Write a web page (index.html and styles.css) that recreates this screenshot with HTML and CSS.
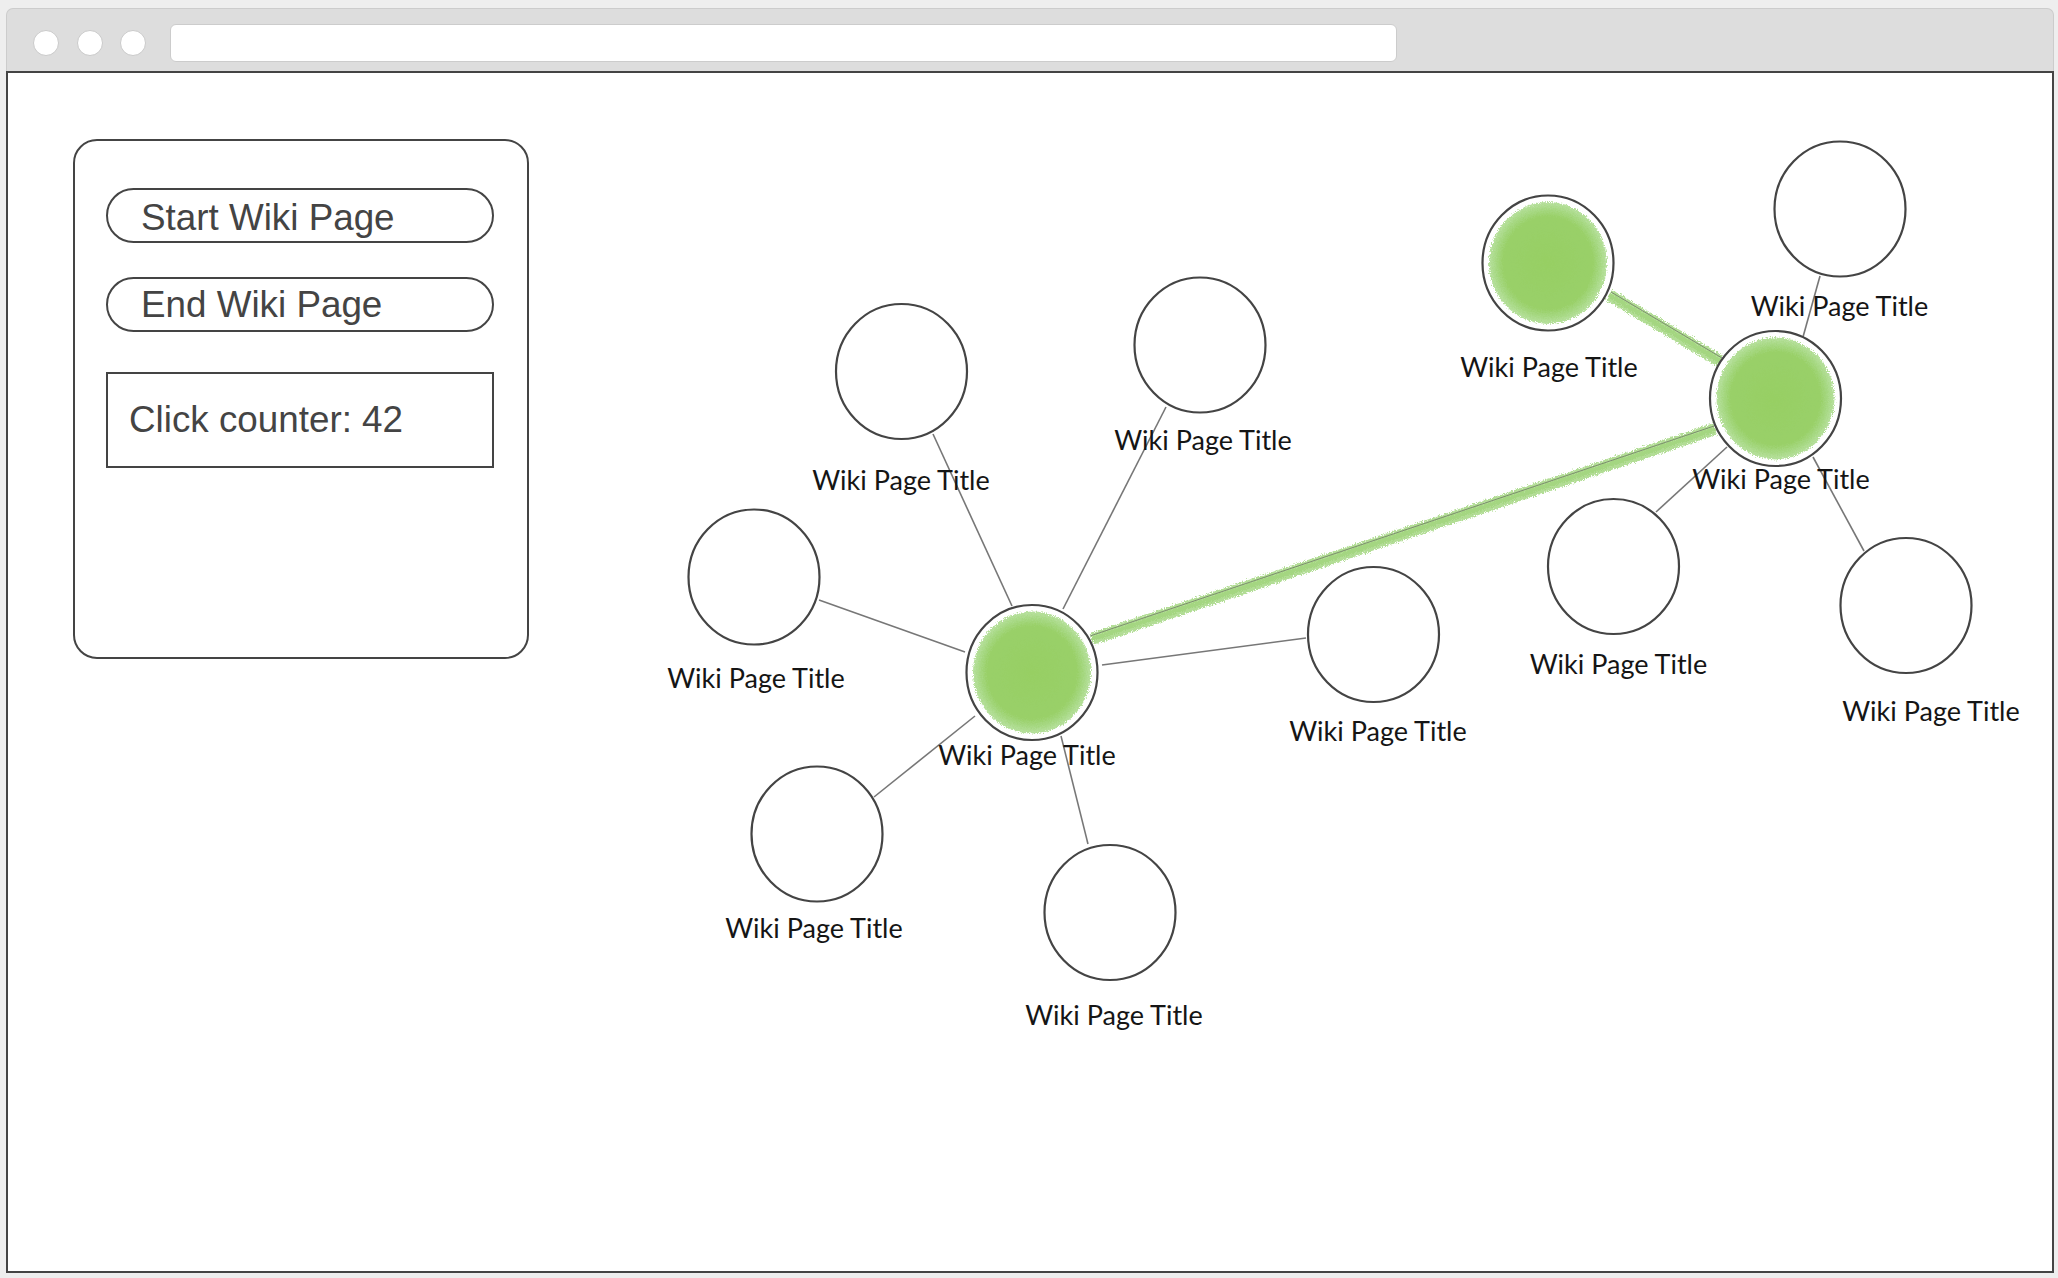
FILE: index.html
```html
<!DOCTYPE html>
<html lang="en">
<head>
<meta charset="utf-8">
<title>Wiki Race</title>
<link rel="stylesheet" href="styles.css">
</head>
<body>
<div class="window">
  <div class="toolbar">
    <span class="dot"></span>
    <span class="dot"></span>
    <span class="dot"></span>
    <div class="address"></div>
  </div>
  <div class="content">
    <div class="panel">
      <button class="pill">Start Wiki Page</button>
      <button class="pill">End Wiki Page</button>
      <div class="counter">Click counter: 42</div>
    </div>
    <svg class="graph" width="2044" height="1198" viewBox="8 73 2044 1198" xmlns="http://www.w3.org/2000/svg">
      <defs>
        <filter id="rough" x="-10%" y="-10%" width="120%" height="120%">
          <feTurbulence type="fractalNoise" baseFrequency="0.8" numOctaves="2" seed="3" result="noise"/>
          <feDisplacementMap in="SourceGraphic" in2="noise" scale="6" xChannelSelector="R" yChannelSelector="G"/>
        </filter>
        <filter id="roughline" x="-5%" y="-50%" width="110%" height="200%">
          <feTurbulence type="fractalNoise" baseFrequency="0.9" numOctaves="2" seed="7" result="noise"/>
          <feDisplacementMap in="SourceGraphic" in2="noise" scale="6" xChannelSelector="R" yChannelSelector="G"/>
        </filter>
        <radialGradient id="chalk" cx="50%" cy="50%" r="50%">
          <stop offset="0%" stop-color="#97cf64"/>
          <stop offset="76%" stop-color="#99d068"/>
          <stop offset="88%" stop-color="#a6d882"/>
          <stop offset="100%" stop-color="#b8e19f"/>
        </radialGradient>
      </defs>

      <g class="edges">
        <line x1="1012" y1="606" x2="933" y2="434"/>
        <line x1="1063" y1="609" x2="1166" y2="407"/>
        <line x1="965" y1="652" x2="819" y2="600"/>
        <line x1="1102" y1="665" x2="1306" y2="638"/>
        <line x1="975" y1="716" x2="874" y2="797"/>
        <line x1="1061" y1="736" x2="1088" y2="844"/>
        <line x1="1803" y1="337" x2="1820" y2="276"/>
        <line x1="1727" y1="447" x2="1656" y2="512"/>
        <line x1="1813" y1="457" x2="1864" y2="551"/>
      </g>

      <g class="path-edges">
        <line class="chalk-outer" x1="1092" y1="639" x2="1715" y2="429"/>
        <line class="chalk-inner" x1="1092" y1="639" x2="1715" y2="429"/>
        <line class="thin" x1="1090" y1="636" x2="1714" y2="426"/>
        <line class="chalk-outer" x1="1609" y1="295" x2="1720" y2="361"/>
        <line class="chalk-inner" x1="1609" y1="295" x2="1720" y2="361"/>
        <line class="thin" x1="1611" y1="292" x2="1722" y2="358"/>
      </g>

      <g class="nodes">
        <ellipse cx="901.5" cy="371.5" rx="65.5" ry="67.5"/>
        <ellipse cx="1200" cy="345" rx="65.5" ry="67.5"/>
        <ellipse cx="754" cy="577" rx="65.5" ry="67.5"/>
        <ellipse cx="1032" cy="672.5" rx="65.5" ry="67.5"/>
        <ellipse cx="1373.5" cy="634.5" rx="65.5" ry="67.5"/>
        <ellipse cx="817" cy="834" rx="65.5" ry="67.5"/>
        <ellipse cx="1110" cy="912.5" rx="65.5" ry="67.5"/>
        <ellipse cx="1548" cy="263" rx="65.5" ry="67.5"/>
        <ellipse cx="1840" cy="209" rx="65.5" ry="67.5"/>
        <ellipse cx="1775.5" cy="398.5" rx="65.5" ry="67.5"/>
        <ellipse cx="1613.5" cy="566.5" rx="65.5" ry="67.5"/>
        <ellipse cx="1906" cy="605.5" rx="65.5" ry="67.5"/>
      </g>

      <g class="fills">
        <ellipse cx="1032" cy="672.5" rx="59" ry="61"/>
        <ellipse cx="1548" cy="263" rx="59" ry="61"/>
        <ellipse cx="1775.5" cy="398.5" rx="59" ry="61"/>
      </g>

      <g class="labels">
        <text x="901" y="490">Wiki Page Title</text>
        <text x="1203" y="450">Wiki Page Title</text>
        <text x="756" y="688">Wiki Page Title</text>
        <text x="1027" y="765">Wiki Page Title</text>
        <text x="1378" y="741">Wiki Page Title</text>
        <text x="814" y="938">Wiki Page Title</text>
        <text x="1114" y="1025">Wiki Page Title</text>
        <text x="1549" y="377">Wiki Page Title</text>
        <text x="1839.5" y="316">Wiki Page Title</text>
        <text x="1781" y="489">Wiki Page Title</text>
        <text x="1618.5" y="674">Wiki Page Title</text>
        <text x="1931" y="721">Wiki Page Title</text>
      </g>
    </svg>
  </div>
</div>
</body>
</html>
```
FILE: styles.css
```css
* {
  box-sizing: border-box;
}

html, body {
  margin: 0;
  padding: 0;
  background: #eeeeee;
}

body {
  font-family: "Liberation Sans", Arial, sans-serif;
}

.window {
  margin: 8px 4px 0 6px;
  width: 2048px;
}

.toolbar {
  height: 63px;
  background: #dddddd;
  border: 1px solid #cccccc;
  border-bottom: none;
  border-radius: 7px 7px 0 0;
  padding: 5px 0 0 26px;
  display: flex;
  align-items: center;
  gap: 17.5px;
}

.dot {
  width: 26px;
  height: 26px;
  border-radius: 50%;
  background: #ffffff;
  border: 1.5px solid #cacaca;
  flex: none;
}

.address {
  margin-left: 6.5px;
  width: 1227px;
  height: 38px;
  background: #ffffff;
  border: 1.5px solid #cccccc;
  border-radius: 6px;
}

.content {
  height: 1202px;
  background: #ffffff;
  border: 2px solid #444444;
  box-shadow: 0 3px 0 #e4e4e4;
  display: grid;
}

.panel,
.graph {
  grid-area: 1 / 1;
}

.panel {
  align-self: start;
  justify-self: start;
  margin: 65.5px 0 0 65px;
  width: 456px;
  height: 520.5px;
  border: 2px solid #444444;
  border-radius: 24px;
  padding: 47.5px 0 0 31px;
  display: flex;
  flex-direction: column;
  align-items: flex-start;
  position: relative;
  z-index: 1;
}

.pill {
  width: 387.5px;
  height: 55px;
  border: 2px solid #444444;
  border-radius: 28px;
  background: #ffffff;
  font-family: "Liberation Sans", Arial, sans-serif;
  font-size: 36.8px;
  color: #444444;
  text-align: left;
  padding: 6px 0 0 33px;
  margin: 0 0 34px 0;
  line-height: 1;
}

.pill + .pill {
  margin-bottom: 40px;
  padding-top: 1.5px;
}

.counter {
  width: 387.5px;
  height: 96px;
  border: 2px solid #444444;
  font-size: 36.8px;
  color: #444444;
  display: flex;
  align-items: center;
  padding-left: 21px;
}

.graph {
  display: block;
}

.edges line {
  stroke: #777777;
  stroke-width: 1.6;
}

.path-edges .chalk-outer {
  stroke: #b2dd95;
  stroke-width: 12;
  filter: url(#roughline);
}

.path-edges .chalk-inner {
  stroke: #a4d681;
  stroke-width: 5;
  filter: url(#roughline);
}

.path-edges .thin {
  stroke: #6f7a66;
  stroke-width: 1;
  opacity: 0.8;
}

.nodes ellipse {
  fill: #ffffff;
  stroke: #444444;
  stroke-width: 2.2;
}

.fills ellipse {
  fill: url(#chalk);
  filter: url(#rough);
}

.labels text {
  font-family: Lato, "Open Sans", sans-serif;
  font-size: 27px;
  fill: #151515;
  text-anchor: middle;
}
```
